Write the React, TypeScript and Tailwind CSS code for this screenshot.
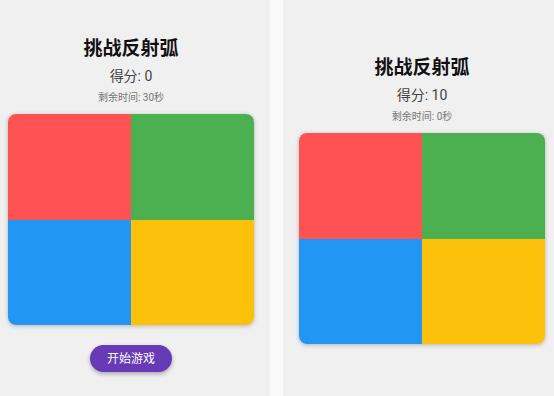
import React from "react";

const FONT = { fontFamily: "Roboto, 'Noto Sans CJK SC', sans-serif" };

function Board() {
  return (
    <div className="grid h-[211px] w-full grid-cols-2 grid-rows-2 overflow-hidden rounded-lg shadow-[0_1px_4px_rgba(0,0,0,0.25)]">
      <div className="bg-[#ff5252]" />
      <div className="bg-[#4caf50]" />
      <div className="bg-[#2196f3]" />
      <div className="bg-[#fcc10a]" />
    </div>
  );
}

function GamePanel({ score, time, showButton }: { score: number; time: number; showButton: boolean }) {
  return (
    <div className="flex flex-col items-center">
      <h1 className="text-[19px] leading-[28px] font-bold text-[#111]">挑战反射弧</h1>
      <p className="mt-[3px] text-[14px] leading-[20px] text-[#444]">得分: {score}</p>
      <p className="mt-[5px] text-[10px] leading-[14px] text-[#777]">剩余时间: {time}秒</p>
      <div className="mt-[9px] w-full">
        <Board />
      </div>
      {showButton && (
        <button className="mt-[20px] h-[27px] w-[82px] rounded-full bg-[#673ab7] text-[12px] text-white shadow-[0_2px_4px_rgba(0,0,0,0.3)]">
          开始游戏
        </button>
      )}
    </div>
  );
}

export default function App() {
  return (
    <div className="flex h-[396px] w-[554px] bg-[#fafafa]" style={FONT}>
      <div className="h-full w-[270px] bg-[#f0f0f0] pt-[35px] pr-4 pl-2">
        <GamePanel score={0} time={30} showButton />
      </div>
      <div className="ml-[13px] h-full w-[271px] bg-[#f0f0f0] pt-[54px] pr-[9px] pl-4">
        <GamePanel score={10} time={0} showButton={false} />
      </div>
    </div>
  );
}
